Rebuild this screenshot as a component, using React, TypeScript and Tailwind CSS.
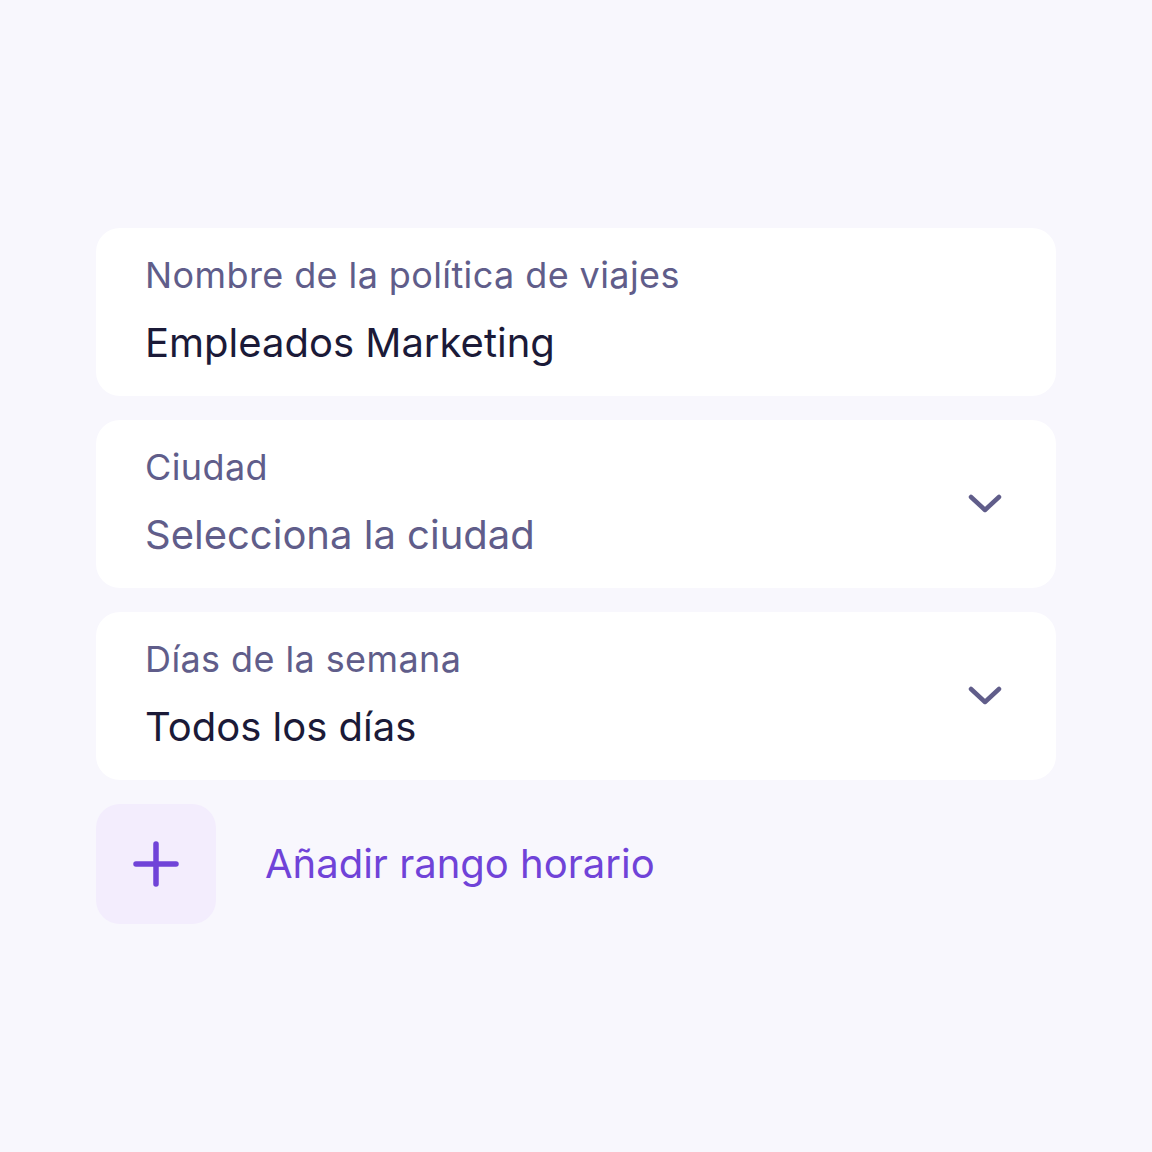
import React from "react";

const Chevron = () => (
  <svg width="34" height="20" viewBox="0 0 34 20" fill="none">
    <path d="M3 3 L17 16 L31 3" stroke="#605d8a" strokeWidth="4.5" strokeLinecap="round" strokeLinejoin="round" />
  </svg>
);

function Field({ label, value, valueMuted, select }: { label: string; value: string; valueMuted?: boolean; select?: boolean }) {
  return (
    <div className="relative flex h-[168px] w-[960px] flex-col gap-[22px] rounded-3xl bg-white pl-[49px] pr-[54px] pt-[25px]">
      <div className="text-[36px] leading-[44px] tracking-[0.4px] text-[#605d8a]">{label}</div>
      <div className={"text-[40px] leading-[48px] " + (valueMuted ? "text-[#605d8a]" : "text-[#1b1a38]")}>{value}</div>
      {select && (
        <div className="absolute right-[54px] top-1/2 -translate-y-1/2">
          <Chevron />
        </div>
      )}
    </div>
  );
}

export default function App() {
  return (
    <div className="flex min-h-[1152px] w-full flex-col items-center bg-[#f8f7fd] pt-[228px]" style={{ fontFamily: "Inter, sans-serif" }}>
      <div className="flex flex-col gap-[24px]">
        <Field label="Nombre de la política de viajes" value="Empleados Marketing" />
        <Field label="Ciudad" value="Selecciona la ciudad" valueMuted select />
        <Field label="Días de la semana" value="Todos los días" select />
        <div className="flex items-center gap-[49px]">
          <div className="flex h-[120px] w-[120px] items-center justify-center rounded-3xl bg-[#f3edfd]">
            <svg width="46" height="46" viewBox="0 0 46 46" fill="none">
              <path d="M23 3 V43 M3 23 H43" stroke="#7043d8" strokeWidth="5.5" strokeLinecap="round" />
            </svg>
          </div>
          <div className="text-[40px] leading-[48px] text-[#7043d8]">Añadir rango horario</div>
        </div>
      </div>
    </div>
  );
}
